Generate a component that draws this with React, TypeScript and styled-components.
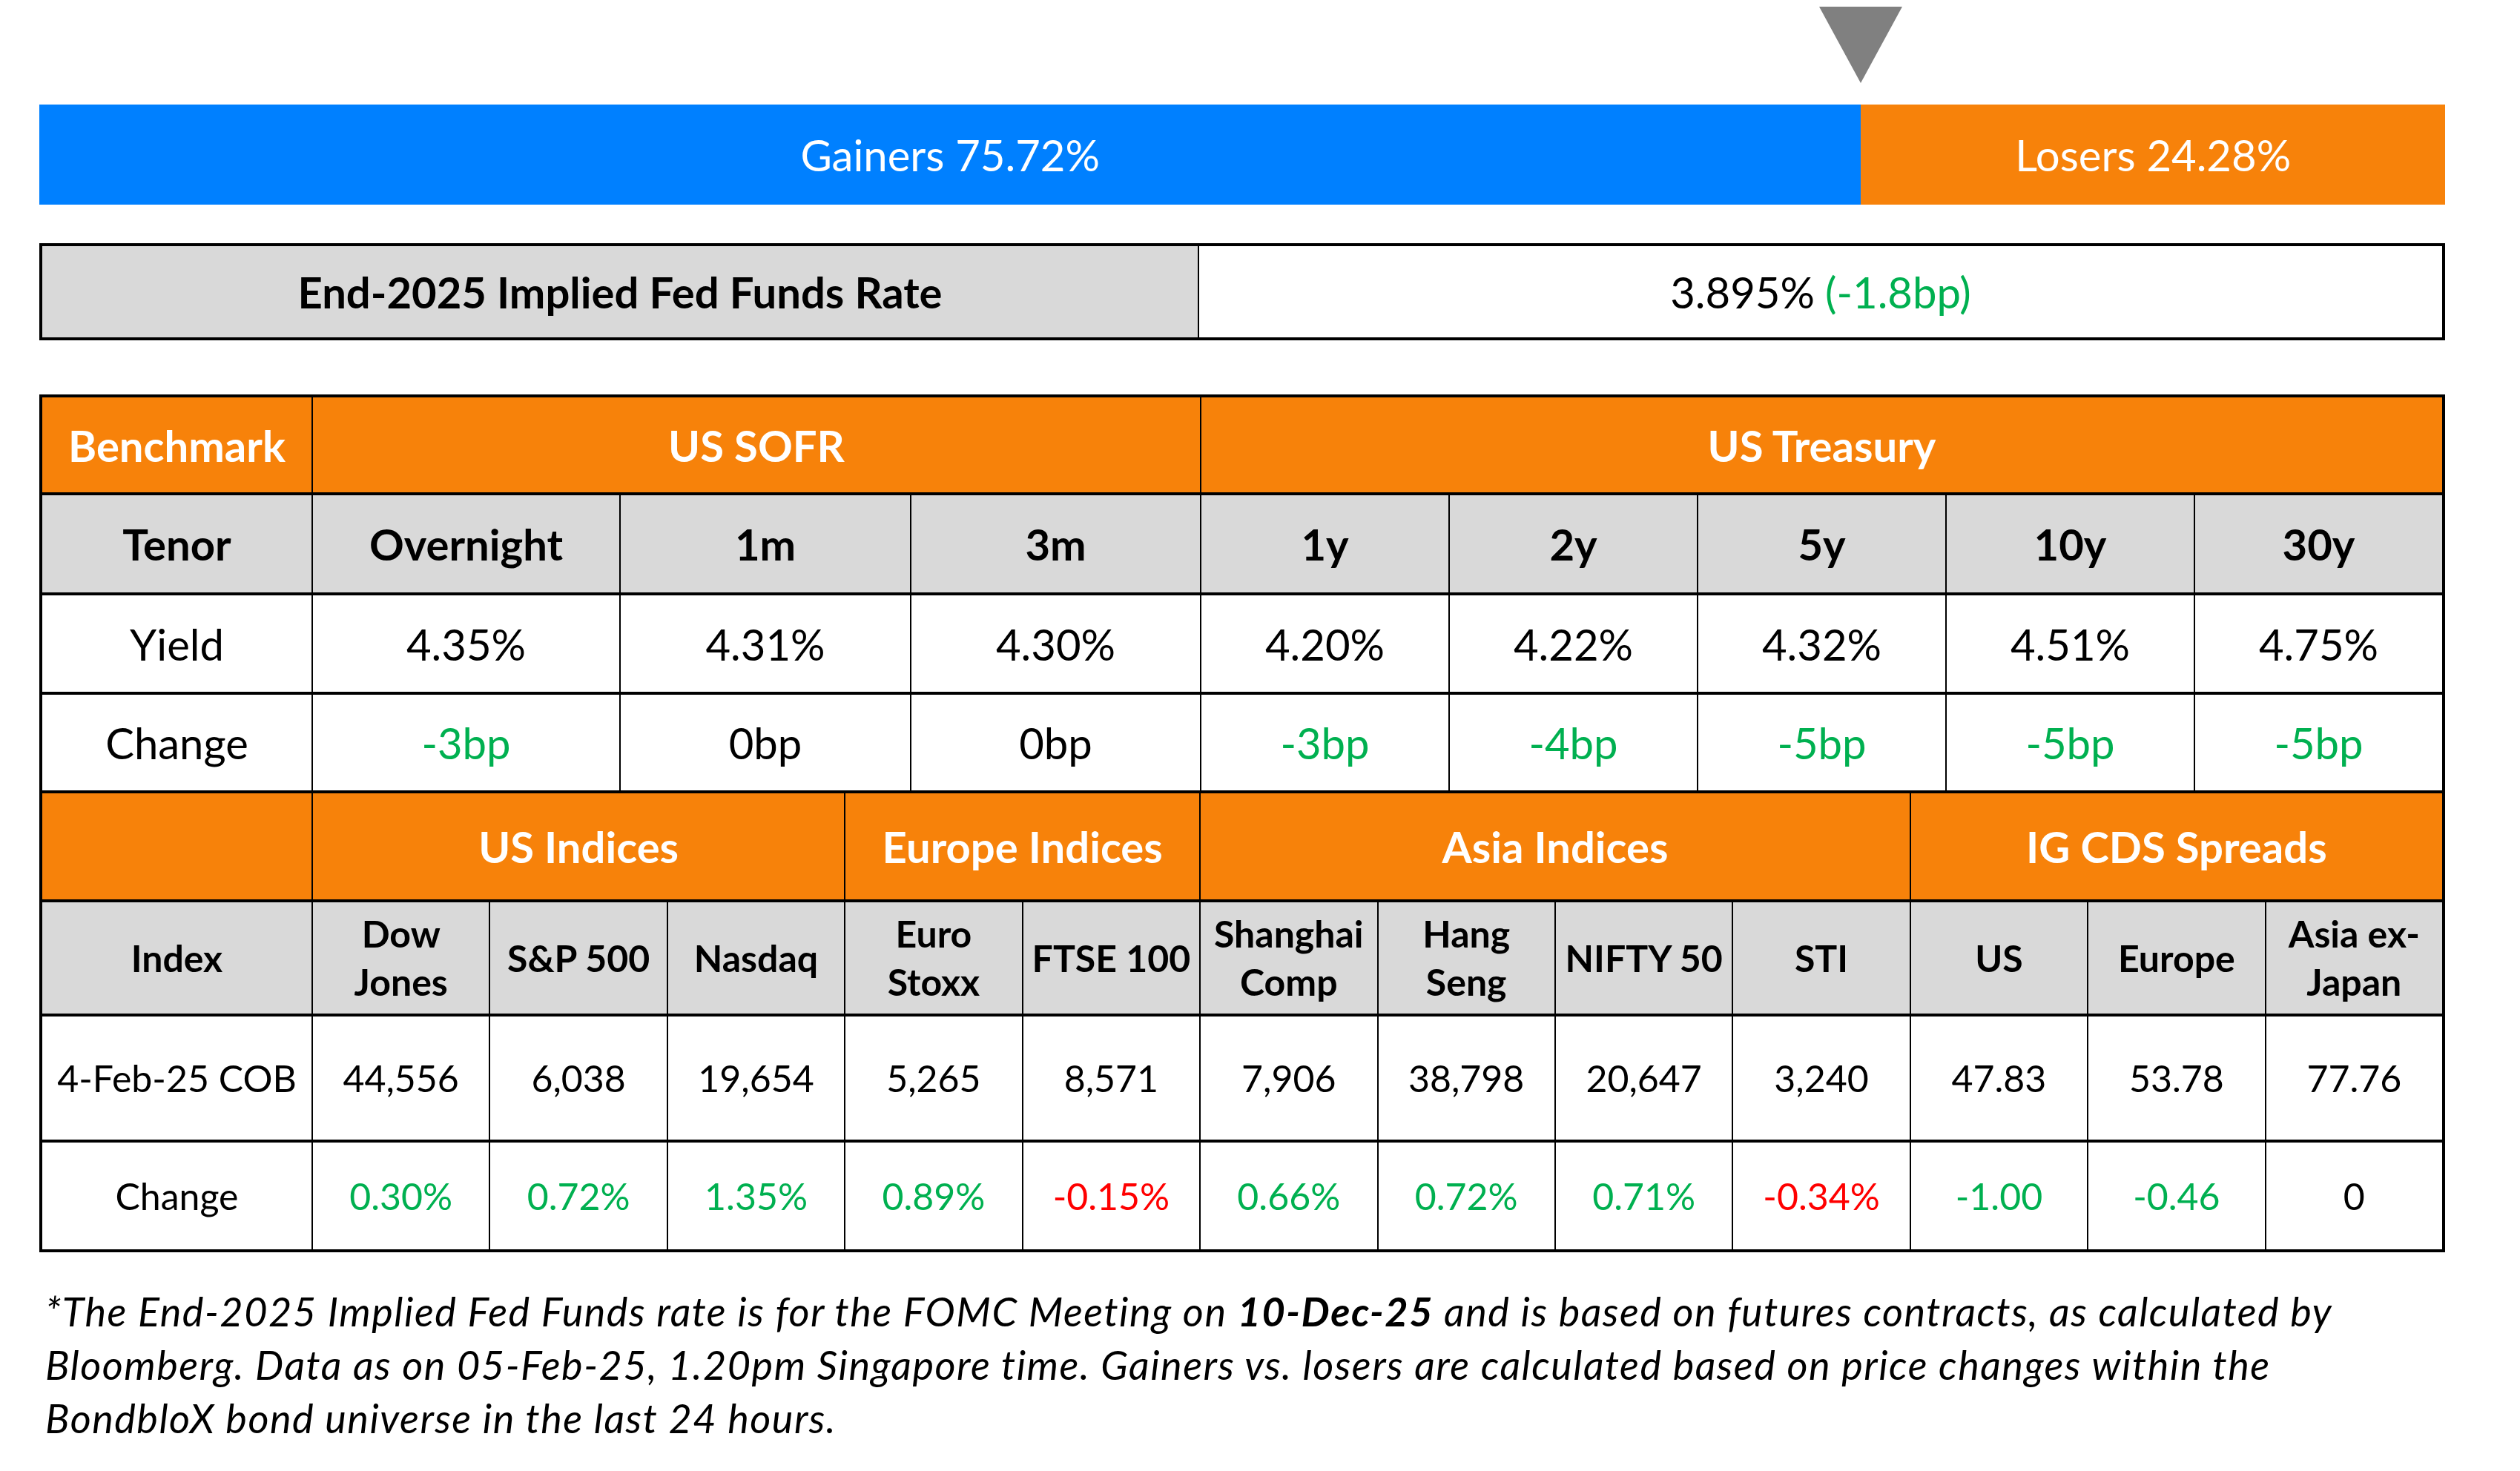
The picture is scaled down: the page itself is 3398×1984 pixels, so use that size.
import React, { Fragment } from 'react';
import styled, { createGlobalStyle } from 'styled-components';

const palette = {
  orange: '#F7820A',
  blue: '#0080FF',
  grey: '#D9D9D9',
  green: '#00B050',
  red: '#FF0000',
  marker: '#808080',
  line: '#000000',
};

type Tone = 'up' | 'down' | 'flat';

const toneColor = (tone?: Tone) =>
  tone === 'up' ? palette.green : tone === 'down' ? palette.red : '#000';

const GlobalStyle = createGlobalStyle`
  html, body {
    margin: 0;
    padding: 0;
    background: #fff;
  }
  body {
    font-family: Lato, "Liberation Sans", sans-serif;
    color: #000;
  }
  * {
    box-sizing: border-box;
  }
`;

const Page = styled.main`
  width: calc(3244px + 53px);
  padding: 0 0 40px 53px;
`;

const MarkerRow = styled.div`
  height: 141px;
  padding-top: 9px;
  display: flex;
  align-items: flex-start;
`;

const Marker = styled.svg`
  display: block;
  flex: none;
`;

const MarkerTrack = styled.div`
  width: 3244px;
  display: flex;
`;

const Bar = styled.div`
  width: 3244px;
  height: 135px;
  display: flex;
`;

const BarSegment = styled.div<{ $color: string }>`
  height: 100%;
  background: ${(p) => p.$color};
  color: #fff;
  font-size: 58px;
  display: flex;
  align-items: center;
  justify-content: center;
`;

const RateBox = styled.div`
  width: 3244px;
  height: 131px;
  margin-top: 52px;
  display: grid;
  grid-template-columns: 1558px 1fr;
  gap: 2px;
  padding: 4px;
  background: ${palette.line};
`;

const RateLabel = styled.div`
  background: ${palette.grey};
  font-weight: 700;
  font-size: 58px;
  display: flex;
  align-items: center;
  justify-content: center;
`;

const RateValue = styled.div`
  background: #fff;
  font-size: 58px;
  display: flex;
  align-items: center;
  justify-content: center;
  gap: 14px;
`;

const Delta = styled.span<{ $tone?: Tone }>`
  color: ${(p) => toneColor(p.$tone)};
`;

const Tables = styled.section`
  width: 3244px;
  margin-top: 73px;
`;

const Grid = styled.div<{ $cols: string; $rows: string; $first?: boolean }>`
  display: grid;
  grid-template-columns: ${(p) => p.$cols};
  grid-template-rows: ${(p) => p.$rows};
  gap: 4px 2px;
  padding: ${(p) => (p.$first ? '4px 4px 0' : '4px')};
  background: ${palette.line};
`;

type CellKind = 'head' | 'label' | 'data';

const Cell = styled.div<{ $kind: CellKind; $span?: number; $size: number; $tone?: Tone }>`
  grid-column: span ${(p) => p.$span ?? 1};
  display: flex;
  align-items: center;
  justify-content: center;
  text-align: center;
  white-space: pre-line;
  line-height: 65px;
  font-size: ${(p) => p.$size}px;
  font-weight: ${(p) => (p.$kind === 'data' ? 400 : 700)};
  background: ${(p) =>
    p.$kind === 'head' ? palette.orange : p.$kind === 'label' ? palette.grey : '#fff'};
  color: ${(p) => (p.$kind === 'head' ? '#fff' : toneColor(p.$tone))};
`;

const Footnote = styled.p`
  margin: 44px 0 0 8px;
  font-size: 54px;
  letter-spacing: 1.5px;
  line-height: 72px;
  font-style: italic;
`;

interface Tenor {
  tenor: string;
  yield: string;
  change: string;
  tone: Tone;
}

const sofr: Tenor[] = [
  { tenor: 'Overnight', yield: '4.35%', change: '-3bp', tone: 'up' },
  { tenor: '1m', yield: '4.31%', change: '0bp', tone: 'flat' },
  { tenor: '3m', yield: '4.30%', change: '0bp', tone: 'flat' },
];

const treasury: Tenor[] = [
  { tenor: '1y', yield: '4.20%', change: '-3bp', tone: 'up' },
  { tenor: '2y', yield: '4.22%', change: '-4bp', tone: 'up' },
  { tenor: '5y', yield: '4.32%', change: '-5bp', tone: 'up' },
  { tenor: '10y', yield: '4.51%', change: '-5bp', tone: 'up' },
  { tenor: '30y', yield: '4.75%', change: '-5bp', tone: 'up' },
];

interface Quote {
  name: string;
  level: string;
  change: string;
  tone: Tone;
}

const groups: { title: string; items: Quote[] }[] = [
  {
    title: 'US Indices',
    items: [
      { name: 'Dow\nJones', level: '44,556', change: '0.30%', tone: 'up' },
      { name: 'S&P 500', level: '6,038', change: '0.72%', tone: 'up' },
      { name: 'Nasdaq', level: '19,654', change: '1.35%', tone: 'up' },
    ],
  },
  {
    title: 'Europe Indices',
    items: [
      { name: 'Euro\nStoxx', level: '5,265', change: '0.89%', tone: 'up' },
      { name: 'FTSE 100', level: '8,571', change: '-0.15%', tone: 'down' },
    ],
  },
  {
    title: 'Asia Indices',
    items: [
      { name: 'Shanghai\nComp', level: '7,906', change: '0.66%', tone: 'up' },
      { name: 'Hang\nSeng', level: '38,798', change: '0.72%', tone: 'up' },
      { name: 'NIFTY 50', level: '20,647', change: '0.71%', tone: 'up' },
      { name: 'STI', level: '3,240', change: '-0.34%', tone: 'down' },
    ],
  },
  {
    title: 'IG CDS Spreads',
    items: [
      { name: 'US', level: '47.83', change: '-1.00', tone: 'up' },
      { name: 'Europe', level: '53.78', change: '-0.46', tone: 'up' },
      { name: 'Asia ex-\nJapan', level: '77.76', change: '0', tone: 'flat' },
    ],
  },
];

const gainers = 75.72;
const losers = 24.28;

const App: React.FC = () => {
  const tenors = [...sofr, ...treasury];
  const quotes = groups.flatMap((g) => g.items);

  return (
    <Fragment>
      <GlobalStyle />
      <Page>
        <MarkerRow>
          <MarkerTrack>
            <div style={{ width: `calc(${gainers}% - 56px)` }} />
            <Marker width="112" height="103" viewBox="0 0 112 103">
              <polygon points="0,0 112,0 56,103" fill={palette.marker} />
            </Marker>
          </MarkerTrack>
        </MarkerRow>

        <Bar>
          <BarSegment $color={palette.blue} style={{ width: `${gainers}%` }}>
            Gainers {gainers.toFixed(2)}%
          </BarSegment>
          <BarSegment $color={palette.orange} style={{ width: `${losers}%` }}>
            Losers {losers.toFixed(2)}%
          </BarSegment>
        </Bar>

        <RateBox>
          <RateLabel>End-2025 Implied Fed Funds Rate</RateLabel>
          <RateValue>
            <span>3.895%</span>
            <Delta $tone="up">(-1.8bp)</Delta>
          </RateValue>
        </RateBox>

        <Tables>
          <Grid
            $first
            $cols="363px 413px 390px 389px repeat(5, 1fr)"
            $rows="128px 131px 130px 129px"
          >
            <Cell $kind="head" $size={58}>Benchmark</Cell>
            <Cell $kind="head" $size={58} $span={3}>US SOFR</Cell>
            <Cell $kind="head" $size={58} $span={5}>US Treasury</Cell>

            <Cell $kind="label" $size={58}>Tenor</Cell>
            {tenors.map((t) => (
              <Cell key={`t-${t.tenor}`} $kind="label" $size={58}>{t.tenor}</Cell>
            ))}

            <Cell $kind="data" $size={58}>Yield</Cell>
            {tenors.map((t) => (
              <Cell key={`y-${t.tenor}`} $kind="data" $size={58}>{t.yield}</Cell>
            ))}

            <Cell $kind="data" $size={58}>Change</Cell>
            {tenors.map((t) => (
              <Cell key={`c-${t.tenor}`} $kind="data" $size={58} $tone={t.tone}>{t.change}</Cell>
            ))}
          </Grid>

          <Grid $cols="363px repeat(12, 1fr)" $rows="143px 150px 166px 144px">
            <Cell $kind="head" $size={58} />
            {groups.map((g) => (
              <Cell key={g.title} $kind="head" $size={58} $span={g.items.length}>
                {g.title}
              </Cell>
            ))}

            <Cell $kind="label" $size={50}>Index</Cell>
            {quotes.map((q) => (
              <Cell key={`n-${q.name}-${q.level}`} $kind="label" $size={50}>{q.name}</Cell>
            ))}

            <Cell $kind="data" $size={50}>4-Feb-25 COB</Cell>
            {quotes.map((q) => (
              <Cell key={`l-${q.level}`} $kind="data" $size={50}>{q.level}</Cell>
            ))}

            <Cell $kind="data" $size={50}>Change</Cell>
            {quotes.map((q) => (
              <Cell key={`c-${q.level}`} $kind="data" $size={50} $tone={q.tone}>{q.change}</Cell>
            ))}
          </Grid>
        </Tables>

        <Footnote>
          *The End-2025 Implied Fed Funds rate is for the FOMC Meeting on <b>10-Dec-25</b> and is
          based on futures contracts, as calculated by
          <br />
          Bloomberg. Data as on 05-Feb-25, 1.20pm Singapore time. Gainers vs. losers are calculated
          based on price changes within the
          <br />
          BondbloX bond universe in the last 24 hours.
        </Footnote>
      </Page>
    </Fragment>
  );
};

export default App;
